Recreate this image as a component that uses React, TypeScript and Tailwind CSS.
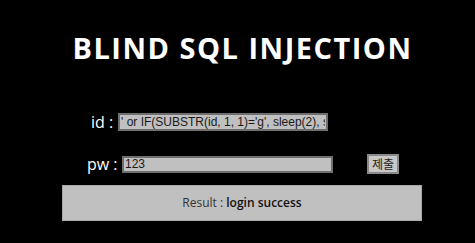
export default function App() {
  return (
    <div className="h-[243px] w-[475px] overflow-hidden bg-black">
      <div className="ml-[62px] w-[360px] pt-[32px]">
        {/* Title */}
        <h1 className="pl-[1px] text-center font-['Open_Sans',sans-serif] text-[29px] font-bold leading-[32px] tracking-[1.5px] text-white">
          BLIND SQL INJECTION
        </h1>

        {/* id row */}
        <div className="mt-[49px] flex h-[18px] items-center">
          <span className="ml-[29px] w-[27px] font-['Open_Sans',sans-serif] text-[16px] leading-none text-white">id :</span>
          <input
            readOnly
            value="' or IF(SUBSTR(id, 1, 1)='g', sleep(2), sleep(0)) #"
            className="h-[18px] w-[210px] border-2 border-[#6f6f6f] bg-[#c0c0c0] px-[1px] font-['Liberation_Sans',sans-serif] text-[12px] text-[#1a1a1a] outline-none"
          />
        </div>

        {/* pw row */}
        <div className="mt-[23px] flex h-[20px] items-center">
          <span className="ml-[25px] w-[35px] font-['Open_Sans',sans-serif] text-[16px] leading-none text-white">pw :</span>
          <input
            readOnly
            value="123"
            className="h-[17px] w-[211px] border-2 border-[#6f6f6f] bg-[#c0c0c0] px-[1px] font-['Liberation_Sans',sans-serif] text-[12px] text-[#1a1a1a] outline-none"
          />
          <button className="ml-[34px] h-[20px] w-[32px] border-2 border-[#8a8a8a] bg-[#c8c8c8] font-['Noto_Sans_CJK_KR',sans-serif] text-[12px] leading-none text-[#222]">
            제출
          </button>
        </div>

        {/* Result */}
        <div className="mt-[11px] flex h-[36px] items-center justify-center border border-[#a8a8a8] bg-[#c0c0c0] font-['Open_Sans',sans-serif] text-[12px] text-[#333]">
          <span>Result :&nbsp;</span>
          <span className="font-semibold text-[#111]">login success</span>
        </div>
      </div>
    </div>
  );
}
